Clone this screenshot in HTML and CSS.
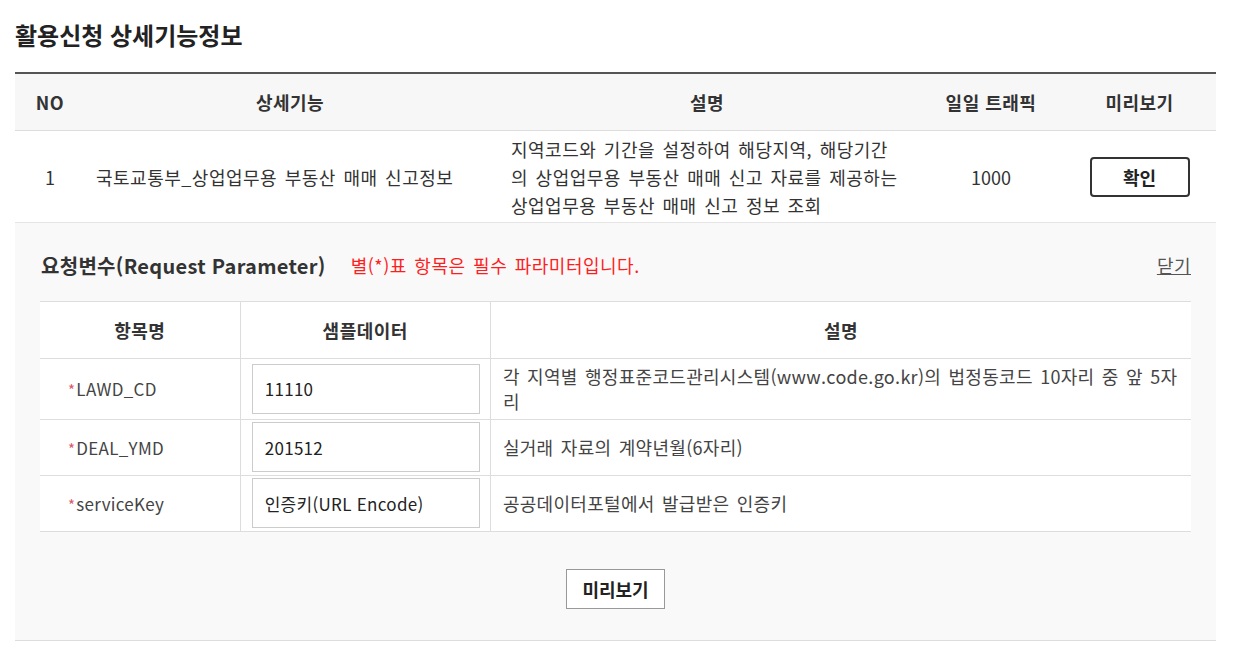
FILE: index.html
```html
<!DOCTYPE html>
<html lang="ko">

<head>
    <meta charset="UTF-8">
    <meta name="viewport" content="width=device-width, initial-scale=1.0">
    <title>활용신청 상세기능정보</title>
    <link rel="stylesheet" href="styles.css">
</head>

<body>

    <div class="wrap">
        <h2 class="page-title">활용신청 상세기능정보</h2>

        <!-- 상세기능 목록 -->
        <table class="func-table">
            <colgroup>
                <col style="width: 70px;">
                <col style="width: 410px;">
                <col style="width: 424px;">
                <col style="width: 144px;">
                <col style="width: 153px;">
            </colgroup>
            <thead>
                <tr>
                    <th>NO</th>
                    <th>상세기능</th>
                    <th>설명</th>
                    <th>일일 트래픽</th>
                    <th>미리보기</th>
                </tr>
            </thead>
            <tbody>
                <tr>
                    <td class="center">1</td>
                    <td class="name">국토교통부_상업업무용 부동산 매매 신고정보</td>
                    <td class="desc">지역코드와 기간을 설정하여 해당지역, 해당기간의 상업업무용 부동산 매매 신고 자료를 제공하는 상업업무용 부동산 매매 신고 정보 조회</td>
                    <td class="center">1000</td>
                    <td class="center"><button class="btn-check">확인</button></td>
                </tr>
            </tbody>
        </table>

        <!-- 요청변수 -->
        <div class="param-box">
            <div class="param-head">
                <h3>요청변수(Request Parameter)</h3>
                <span class="req-note">별(*)표 항목은 필수 파라미터입니다.</span>
                <a href="#" class="close-link">닫기</a>
            </div>

            <table class="param-table">
                <colgroup>
                    <col style="width: 200px;">
                    <col style="width: 250px;">
                    <col style="width: 700px;">
                </colgroup>
                <thead>
                    <tr>
                        <th>항목명</th>
                        <th>샘플데이터</th>
                        <th>설명</th>
                    </tr>
                </thead>
                <tbody>
                    <tr>
                        <td class="label"><span class="star">*</span>LAWD_CD</td>
                        <td class="sample"><input type="text" value="11110"></td>
                        <td class="info">각 지역별 행정표준코드관리시스템(www.code.go.kr)의 법정동코드 10자리 중 앞 5자리</td>
                    </tr>
                    <tr>
                        <td class="label"><span class="star">*</span>DEAL_YMD</td>
                        <td class="sample"><input type="text" value="201512"></td>
                        <td class="info">실거래 자료의 계약년월(6자리)</td>
                    </tr>
                    <tr>
                        <td class="label"><span class="star">*</span>serviceKey</td>
                        <td class="sample"><input type="text" value="인증키(URL Encode)"></td>
                        <td class="info">공공데이터포털에서 발급받은 인증키</td>
                    </tr>
                </tbody>
            </table>

            <div class="btn-area">
                <button class="btn-preview">미리보기</button>
            </div>
        </div>
    </div>

</body>

</html>
```

FILE: styles.css
```css
body {
    font-family: "Noto Sans CJK KR", "Noto Sans", sans-serif;
    margin: 0;
    background-color: #ffffff;
    color: #333;
}

.wrap {
    width: 1201px;
    margin-left: 15px;
    padding-top: 20px;
}

.page-title {
    font-size: 24px;
    line-height: 30px;
    font-weight: bold;
    color: #222;
    margin: 0 0 22px;
}

/* 상세기능 목록 */
.func-table {
    width: 100%;
    table-layout: fixed;
    border-collapse: collapse;
    border-top: 2px solid #555;
}

.func-table th {
    height: 56px;
    padding: 0;
    background-color: #f7f7f7;
    border-bottom: 1px solid #ddd;
    font-size: 18px;
    letter-spacing: 0.5px;
    font-weight: bold;
    color: #333;
}

.func-table td {
    height: 87px;
    padding: 2px 0;
    border-bottom: 1px solid #e5e5e5;
    font-size: 18px;
    letter-spacing: 0.5px;
    word-spacing: 2px;
    color: #333;
    vertical-align: middle;
}

.func-table td.center {
    text-align: center;
    letter-spacing: 0;
}

.func-table td.name {
    padding-left: 11px;
}

.func-table td.desc {
    padding: 2px 18px 2px 16px;
    line-height: 28px;
    word-break: break-all;
}

.btn-check {
    width: 100px;
    height: 40px;
    background-color: #fff;
    border: 2px solid #333;
    border-radius: 4px;
    font-family: inherit;
    font-size: 18px;
    font-weight: bold;
    color: #222;
    cursor: pointer;
}

/* 요청변수 */
.param-box {
    background-color: #f9f9f9;
    border-bottom: 1px solid #ddd;
    padding: 27px 25px 31px;
}

.param-head {
    display: flex;
    align-items: center;
    height: 30px;
    margin-bottom: 21px;
}

.param-head h3 {
    margin: 0 25px 0 1px;
    font-size: 20px;
    letter-spacing: 0.3px;
    font-weight: bold;
    color: #333;
}

.req-note {
    font-size: 18px;
    letter-spacing: 0.5px;
    word-spacing: 2px;
    color: #ff1e1e;
}

.close-link {
    margin-left: auto;
    font-size: 18px;
    letter-spacing: 0.5px;
    color: #555;
    text-decoration: underline;
}

.param-table {
    width: 100%;
    table-layout: fixed;
    border-collapse: collapse;
    background-color: #fff;
    border-top: 1px solid #ddd;
}

.param-table th {
    height: 56px;
    padding: 0;
    font-size: 18px;
    letter-spacing: 0.5px;
    font-weight: bold;
    color: #333;
    border-bottom: 1px solid #ddd;
}

.param-table td {
    padding: 2px 10px 3px 11px;
    border-bottom: 1px solid #ddd;
    font-size: 17px;
    color: #444;
    vertical-align: middle;
}

.param-table th + th,
.param-table td + td {
    border-left: 1px solid #ddd;
}

.param-table td.label {
    padding-left: 28px;
    letter-spacing: 0.3px;
}

.star {
    color: #e0566b;
    font-size: 15px;
    margin-right: 1px;
}

.param-table td.info {
    padding: 5px 6px 5px 12px;
    line-height: 25px;
    font-size: 18px;
    letter-spacing: 0.3px;
    word-spacing: 2px;
    word-break: break-all;
}

.param-table input {
    width: 100%;
    height: 50px;
    box-sizing: border-box;
    padding: 0 12px;
    border: 1px solid #ccc;
    font-family: inherit;
    font-size: 17px;
    letter-spacing: 0.3px;
    color: #222;
}

.btn-area {
    text-align: center;
    margin-top: 37px;
}

.btn-preview {
    width: 99px;
    height: 40px;
    background-color: #fff;
    border: 1px solid #999;
    font-family: inherit;
    font-size: 18px;
    font-weight: bold;
    color: #222;
    cursor: pointer;
}
```
